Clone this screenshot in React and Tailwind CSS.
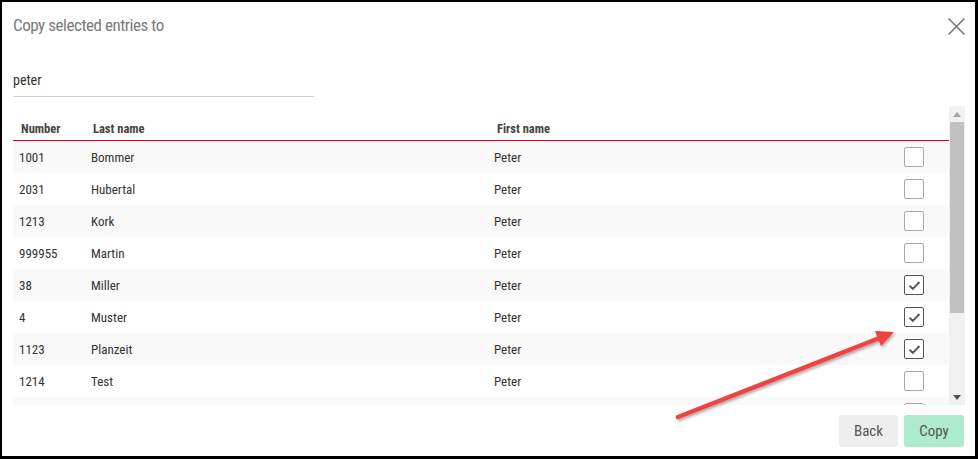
import React from "react";

const rows = [
  ["1001", "Bommer", "Peter", false],
  ["2031", "Hubertal", "Peter", false],
  ["1213", "Kork", "Peter", false],
  ["999955", "Martin", "Peter", false],
  ["38", "Miller", "Peter", true],
  ["4", "Muster", "Peter", true],
  ["1123", "Planzeit", "Peter", true],
  ["1214", "Test", "Peter", false],
  ["", "", "", false],
];

function Checkbox({ checked }) {
  return (
    <div
      className={
        "w-[20px] h-[20px] rounded-[2px] border bg-white flex items-center justify-center " +
        (checked ? "border-[#555]" : "border-[#a8a8a8]")
      }
    >
      {checked && (
        <svg width="13" height="11" viewBox="0 0 13 11">
          <path d="M1.5 5.6 L4.8 8.8 L11.5 2" fill="none" stroke="#555" strokeWidth="1.9" />
        </svg>
      )}
    </div>
  );
}

export default function App() {
  return (
    <div
      className="relative w-[978px] h-[459px] bg-white border-black border-l-2 border-t-2 border-r-[3px] border-b-[3px] overflow-hidden"
      style={{ fontFamily: "'Roboto Condensed', Roboto, 'Liberation Sans Narrow', sans-serif" }}
    >
      <div className="flex flex-col h-full pl-[11px] pr-[10px]">
        <div className="h-[65px] flex items-start justify-between pt-[13px]">
          <div className="text-[17px] leading-[20px] tracking-[-0.45px] text-[#7a7a7a]">
            Copy selected entries to
          </div>
          <svg width="19" height="19" viewBox="0 0 19 19" className="mt-[2px] mr-[-1px]">
            <path d="M1.5 1.5 L17.5 17.5 M17.5 1.5 L1.5 17.5" stroke="#777" strokeWidth="1.6" />
          </svg>
        </div>
        <div className="w-[301px] h-[30px] border-b border-[#cfcfcf] flex items-center pb-[2px] text-[14px] text-[#333]">
          peter
        </div>
        <div className="mt-[9px] h-[299px] flex">
          <div className="flex-1 overflow-hidden">
            <div className="h-[35px] flex items-end pb-[3px] border-b border-[#e3000f] text-[12.5px] leading-[16px] font-bold text-[#444]">
              <div className="w-[72px] pl-[8px]">Number</div>
              <div className="w-[403px] pl-[8px]">Last name</div>
              <div className="pl-[9px]">First name</div>
            </div>
            {rows.map((r, i) => (
              <div
                key={i}
                className={
                  "h-[32px] flex items-center text-[13px] text-[#333] " +
                  (i % 2 === 0 ? "bg-[#f9f9f9]" : "bg-white")
                }
              >
                <div className="w-[72px] pl-[6px] pt-[1px]">{r[0]}</div>
                <div className="w-[403px] pl-[6px] pt-[1px]">{r[1]}</div>
                <div className="flex-1 pl-[6px] pt-[1px]">{r[2]}</div>
                <div className="w-[45px]">
                  <Checkbox checked={r[3]} />
                </div>
              </div>
            ))}
          </div>
          <div className="w-[16px] bg-[#f1f1f1] flex flex-col">
            <div className="h-[16px] flex items-center justify-center">
              <svg width="8" height="5" viewBox="0 0 8 5">
                <path d="M0 5 L4 0 L8 5 Z" fill="#a3a3a3" />
              </svg>
            </div>
            <div className="h-[191px] mx-[1px] bg-[#c1c1c1]" />
            <div className="flex-1" />
            <div className="h-[16px] flex items-center justify-center">
              <svg width="8" height="5" viewBox="0 0 8 5">
                <path d="M0 0 L8 0 L4 5 Z" fill="#505050" />
              </svg>
            </div>
          </div>
        </div>
        <div className="mt-[10px] flex justify-end gap-[6px] pr-[1px]">
          <button className="w-[59px] h-[32px] rounded-[3px] bg-[#eeeeee] text-[15px] text-[#555]">Back</button>
          <button className="w-[60px] h-[32px] rounded-[3px] bg-[#aeeacd] text-[15px] text-[#555]">Copy</button>
        </div>
      </div>
      <svg className="absolute left-0 top-0 pointer-events-none" width="978" height="459" viewBox="-2 -2 978 459">
        <defs>
          <filter id="sh" x="-10%" y="-10%" width="130%" height="130%">
            <feDropShadow dx="1" dy="2" stdDeviation="1.5" floodColor="#000" floodOpacity="0.35" />
          </filter>
        </defs>
        <g filter="url(#sh)">
          <line x1="674" y1="413" x2="878" y2="333" stroke="#ef4343" strokeWidth="4.5" strokeLinecap="round" />
          <path d="M890 328 L871 327 L877 342 Z" fill="#ef4343" />
        </g>
      </svg>
    </div>
  );
}
